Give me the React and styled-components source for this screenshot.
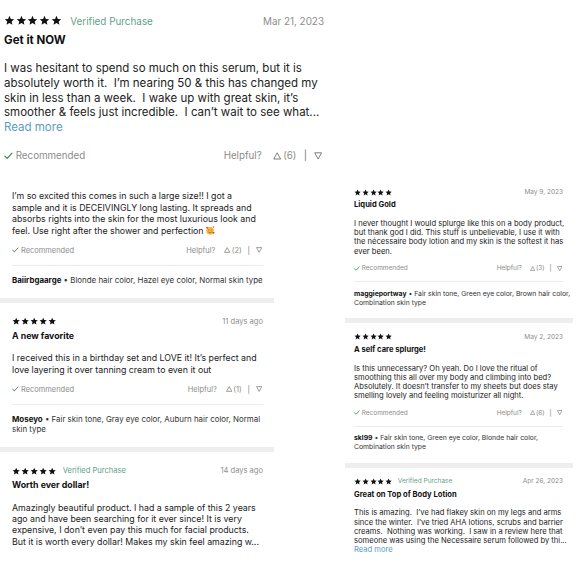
import React from 'react';
import styled, { createGlobalStyle } from 'styled-components';

const Global = createGlobalStyle`
  html, body { margin: 0; padding: 0; background: #fff; }
  body { font-family: Inter, "Noto Sans", "Liberation Sans", sans-serif; color: #222; }
`;

const Page = styled.main`
  width: 580px;
  height: 580px;
  overflow: hidden;
  background: #fff;
  display: flex;
  flex-direction: column;
`;

const TopArea = styled.section`
  width: 328px;
`;

const Columns = styled.div`
  display: grid;
  grid-template-columns: 274px 228px;
  column-gap: 71px;
  align-items: start;
`;

const Column = styled.div`
  display: flex;
  flex-direction: column;
`;

const Card = styled.article`
  font-size: ${p => p.$fs}px;
  padding: ${p => p.$pt} ${p => p.$pr}px 1.42em ${p => p.$pl}px;
  color: #222;
`;

const Header = styled.div`
  display: flex;
  align-items: center;
  height: 1.2em;
`;

const StarRow = styled.span`
  display: inline-flex;
  gap: 0.07em;
`;

const StarSvg = styled.svg`
  width: 0.95em;
  height: 0.95em;
  fill: #111;
  display: block;
`;

const Verified = styled.span`
  margin-left: 0.85em;
  font-size: 0.86em;
  color: #63a08a;
`;

const DateText = styled.span`
  margin-left: auto;
  font-size: 0.86em;
  color: #8e8e8e;
`;

const Title = styled.h3`
  margin: 0.48em 0 0;
  font-size: 1em;
  line-height: 1.24em;
  font-weight: 700;
  color: #111;
`;

const Body = styled.p`
  margin: ${p => (p.$first ? 0 : 2.45 - 0.62 - p.$lh / 2).toFixed(3)}em 0 0;
  line-height: ${p => p.$lh};
  white-space: pre;
  color: #222;
`;

const Line = styled.span`
  display: block;
`;

const MetaLine = styled.span`
  display: block;
  color: #333;
`;

const ReadMore = styled.span`
  display: block;
  color: #5b9dbd;
`;

const Footer = styled.div`
  display: flex;
  align-items: center;
  height: 1.1em;
  margin-top: ${p => (p.$gap - p.$lh / 2 - 0.55).toFixed(3)}em;
`;

const Rec = styled.span`
  display: inline-flex;
  align-items: center;
  gap: 0.3em;
  font-size: 0.85em;
  color: #8c8c8c;
`;

const Helpful = styled.span`
  margin-left: auto;
  margin-right: 0.15em;
  display: inline-flex;
  align-items: center;
  font-size: 0.85em;
  color: #8c8c8c;
`;

const HelpLabel = styled.span`
  margin-right: 1.2em;
`;

const Count = styled.span`
  margin-left: 0.15em;
`;

const Pipe = styled.span`
  margin: 0 0.75em;
  color: #777;
`;

const Tri = styled.svg`
  width: 0.85em;
  height: 0.8em;
  display: block;
`;

const Divider = styled.hr`
  border: 0;
  height: 1px;
  background: #ececec;
  margin: 1.15em 0 0;
`;

const Meta = styled.p`
  margin: 1.12em 0 0;
  font-size: 0.9em;
  line-height: 1.29;
  white-space: pre;
  color: #333;
`;

const User = styled.b`
  font-weight: 700;
  color: #111;
`;

const Bar = styled.div`
  height: 5px;
  background: #eeeeee;
`;

const EmojiSvg = styled.svg`
  width: 1.15em;
  height: 1.05em;
  vertical-align: -0.15em;
  margin-left: 0.2em;
`;

const STAR = 'M12 1.8l3 6.9 7.4.6-5.6 4.9 1.7 7.3L12 17.6 5.5 21.5l1.7-7.3L1.6 9.3 9 8.7z';

const Stars = () => (
  <StarRow>
    {[0, 1, 2, 3, 4].map(i => (
      <StarSvg key={i} viewBox="0 0 24 24"><path d={STAR} /></StarSvg>
    ))}
  </StarRow>
);

const Check = () => (
  <svg width="0.9em" height="0.8em" viewBox="0 0 16 14" style={{ display: 'block' }}>
    <path d="M1.5 7.5 L5.8 11.5 L14.5 2" fill="none" stroke="#3b8a5c" strokeWidth="2.2" strokeLinecap="round" strokeLinejoin="round" />
  </svg>
);

const Up = () => (
  <Tri viewBox="0 0 12 11">
    <path d="M6 1 L11 10 L1 10 Z" fill="none" stroke="#666" strokeWidth="1.2" strokeLinejoin="round" />
  </Tri>
);

const Down = () => (
  <Tri viewBox="0 0 12 11">
    <path d="M1 1 L11 1 L6 10 Z" fill="none" stroke="#666" strokeWidth="1.2" strokeLinejoin="round" />
  </Tri>
);

const Emoji = () => (
  <EmojiSvg viewBox="0 0 20 18">
    <circle cx="10" cy="9.5" r="7.5" fill="#f4b63e" />
    <path d="M6 8.2 q1.2 -1.3 2.4 0" stroke="#6b3b10" strokeWidth="1" fill="none" />
    <path d="M11.6 8.2 q1.2 -1.3 2.4 0" stroke="#6b3b10" strokeWidth="1" fill="none" />
    <path d="M7 12 q3 2.5 6 0" stroke="#6b3b10" strokeWidth="1" fill="none" />
    <path d="M2.5 3.5 c-1-1.6 1.3-2.5 1.8-.9 c.5-1.6 2.8-.7 1.8.9 L4.3 5.6z" fill="#e8362f" />
    <path d="M15 13.5 c-1-1.6 1.3-2.5 1.8-.9 c.5-1.6 2.8-.7 1.8.9 L16.8 15.6z" fill="#e8362f" />
    <path d="M15.5 2 c-.8-1.2 1-1.9 1.4-.7 c.4-1.2 2.2-.5 1.4.7 L16.9 3.6z" fill="#e8362f" />
  </EmojiSvg>
);

function Review({
  fs, lh, pt = '1.55em', pl, pr, header = true, verified, date, title,
  lines, emojiLast, readMore, helpful, user, meta, footGap = 2.25
}) {
  return (
    <Card $fs={fs} $pt={pt} $pl={pl} $pr={pr}>
      {header && (
        <Header>
          <Stars />
          {verified && <Verified>Verified Purchase</Verified>}
          <DateText>{date}</DateText>
        </Header>
      )}
      {title && <Title>{title}</Title>}
      <Body $lh={lh} $first={!header}>
        {lines.map((l, i) => (
          <Line key={i}>
            {l}
            {emojiLast && i === lines.length - 1 && <Emoji />}
          </Line>
        ))}
        {readMore && <ReadMore>Read more</ReadMore>}
      </Body>
      {helpful != null && (
        <Footer $lh={lh} $gap={footGap}>
          <Rec><Check />Recommended</Rec>
          <Helpful>
            <HelpLabel>Helpful?</HelpLabel>
            <Up />
            <Count>({helpful})</Count>
            <Pipe>|</Pipe>
            <Down />
          </Helpful>
        </Footer>
      )}
      {user && (
        <>
          <Divider />
          <Meta>
            <User>{user}</User>
            {' • ' + meta[0]}
            {meta.slice(1).map((m, i) => <MetaLine key={i}>{m}</MetaLine>)}
          </Meta>
        </>
      )}
    </Card>
  );
}

const LEFT = { fs: 8.8, lh: 1.3, pl: 12, pr: 11 };
const RIGHT = { fs: 7.6, lh: 1.2, pl: 9, pr: 10 };

export default function App() {
  return (
    <Page>
      <Global />
      <TopArea>
        <Review
          fs={11.5} lh={1.28} pt="14px" pl={4} pr={4} footGap={2.45}
          verified date="Mar 21, 2023" title="Get it NOW"
          lines={[
            'I was hesitant to spend so much on this serum, but it is',
            'absolutely worth it.  I’m nearing 50 & this has changed my',
            'skin in less than a week.  I wake up with great skin, it’s',
            'smoother & feels just incredible.  I can’t wait to see what...',
          ]}
          readMore helpful={6}
        />
      </TopArea>
      <Columns>
        <Column>
          <Review
            {...LEFT} header={false} pt="12px"
            lines={[
              'I’m so excited this comes in such a large size!! I got a',
              'sample and it is DECEIVINGLY long lasting. It spreads and',
              'absorbs rights into the skin for the most luxurious look and',
              'feel. Use right after the shower and perfection',
            ]}
            emojiLast helpful={2}
            user="Baiirbgaarge" meta={['Blonde hair color, Hazel eye color, Normal skin type']}
          />
          <Bar />
          <Review
            {...LEFT} date="11 days ago" title="A new favorite"
            lines={[
              'I received this in a birthday set and LOVE it! It’s perfect and',
              'love layering it over tanning cream to even it out',
            ]}
            helpful={1}
            user="Moseyo" meta={['Fair skin tone, Gray eye color, Auburn hair color, Normal', 'skin type']}
          />
          <Bar />
          <Review
            {...LEFT} verified date="14 days ago" title="Worth ever dollar!"
            lines={[
              'Amazingly beautiful product. I had a sample of this 2 years',
              'ago and have been searching for it ever since! It is very',
              'expensive, I don’t even pay this much for facial products.',
              'But it is worth every dollar! Makes my skin feel amazing w...',
            ]}
          />
        </Column>
        <Column>
          <Review
            {...RIGHT} pt="9.4px" date="May 9, 2023" title="Liquid Gold"
            lines={[
              'I never thought I would splurge like this on a body product,',
              'but thank god I did. This stuff is unbelievable, I use it with',
              'the nécessaire body lotion and my skin is the softest it has',
              'ever been.',
            ]}
            helpful={3}
            user="maggieportway" meta={['Fair skin tone, Green eye color, Brown hair color,', 'Combination skin type']}
          />
          <Bar />
          <Review
            {...RIGHT} pt="1.2em" date="May 2, 2023" title="A self care splurge!"
            lines={[
              'Is this unnecessary? Oh yeah. Do I love the ritual of',
              'smoothing this all over my body and climbing into bed?',
              'Absolutely. It doesn’t transfer to my sheets but does stay',
              'smelling lovely and feeling moisturizer all night.',
            ]}
            helpful={6}
            user="skl99" meta={['Fair skin tone, Green eye color, Blonde hair color,', 'Combination skin type']}
          />
          <Bar />
          <Review
            {...RIGHT} pt="1.2em" verified date="Apr 26, 2023" title="Great on Top of Body Lotion"
            lines={[
              'This is amazing.  I’ve had flakey skin on my legs and arms',
              'since the winter.  I’ve tried AHA lotions, scrubs and barrier',
              'creams.  Nothing was working.  I saw in a review here that',
              'someone was using the Necessaire serum followed by thi...',
            ]}
            readMore
          />
        </Column>
      </Columns>
    </Page>
  );
}
